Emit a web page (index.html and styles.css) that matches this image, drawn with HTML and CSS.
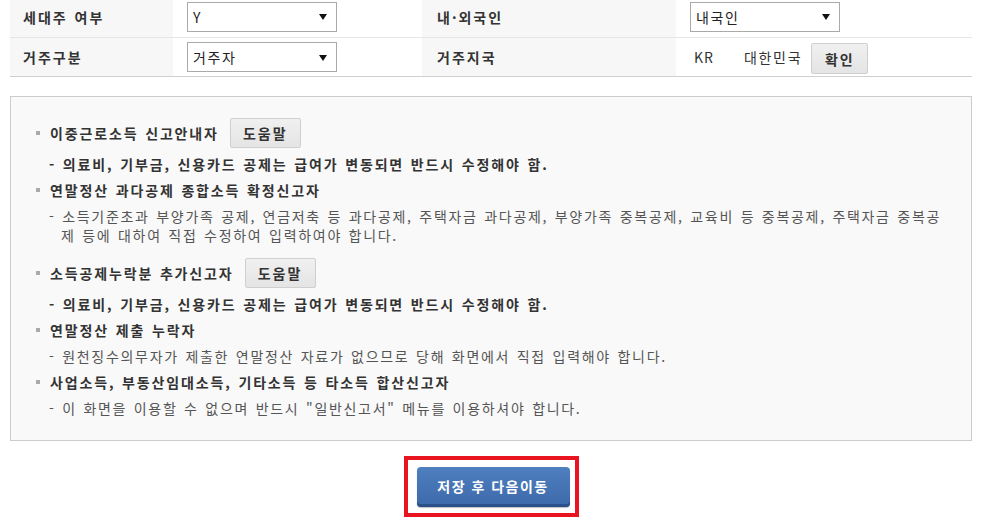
FILE: index.html
```html
<!DOCTYPE html>
<html lang="ko">
<head>
<meta charset="utf-8">
<title>연말정산</title>
<link rel="stylesheet" href="styles.css">
</head>
<body>
<div class="page">
  <div class="info-table">
    <div class="row row-first">
      <div class="cell label">세대주 여부</div>
      <div class="cell value">
        <div class="select"><span class="sel-text">Y</span><svg class="arrow" width="8" height="6" viewBox="0 0 8 6"><path d="M0 0H8L4 6Z" fill="#111"/></svg></div>
      </div>
      <div class="cell label label-2">내·외국인</div>
      <div class="cell value">
        <div class="select"><span class="sel-text">내국인</span><svg class="arrow" width="8" height="6" viewBox="0 0 8 6"><path d="M0 0H8L4 6Z" fill="#111"/></svg></div>
      </div>
    </div>
    <div class="row row-second">
      <div class="cell label">거주구분</div>
      <div class="cell value">
        <div class="select"><span class="sel-text">거주자</span><svg class="arrow" width="8" height="6" viewBox="0 0 8 6"><path d="M0 0H8L4 6Z" fill="#111"/></svg></div>
      </div>
      <div class="cell label label-2">거주지국</div>
      <div class="cell value country">
        <span class="code">KR</span>
        <span class="cname">대한민국</span>
        <button class="btn-gray btn-confirm" type="button">확인</button>
      </div>
    </div>
  </div>

  <div class="notice">
    <ul class="notice-list">
      <li class="head has-btn"><span class="bullet"></span><span class="head-text">이중근로소득 신고안내자</span><button class="btn-gray btn-help" type="button">도움말</button></li>
      <li class="desc strong">- 의료비, 기부금, 신용카드 공제는 급여가 변동되면 반드시 수정해야 함.</li>
      <li class="head"><span class="bullet"></span><span class="head-text">연말정산 과다공제 종합소득 확정신고자</span></li>
      <li class="desc multi">- 소득기준초과 부양가족 공제, 연금저축 등 과다공제, 주택자금 과다공제, 부양가족 중복공제, 교육비 등 중복공제, 주택자금 중복공<br>제 등에 대하여 직접 수정하여 입력하여야 합니다.</li>
      <li class="head has-btn"><span class="bullet"></span><span class="head-text">소득공제누락분 추가신고자</span><button class="btn-gray btn-help" type="button">도움말</button></li>
      <li class="desc strong">- 의료비, 기부금, 신용카드 공제는 급여가 변동되면 반드시 수정해야 함.</li>
      <li class="head"><span class="bullet"></span><span class="head-text">연말정산 제출 누락자</span></li>
      <li class="desc">- 원천징수의무자가 제출한 연말정산 자료가 없으므로 당해 화면에서 직접 입력해야 합니다.</li>
      <li class="head"><span class="bullet"></span><span class="head-text">사업소득, 부동산임대소득, 기타소득 등 타소득 합산신고자</span></li>
      <li class="desc">- 이 화면을 이용할 수 없으며 반드시 "일반신고서" 메뉴를 이용하셔야 합니다.</li>
    </ul>
  </div>

  <div class="actions">
    <div class="highlight">
      <button class="btn-save" type="button">저장 후 다음이동</button>
    </div>
  </div>
</div>
</body>
</html>
```

FILE: styles.css
```css
* { box-sizing: border-box; }

html, body {
  margin: 0;
  padding: 0;
  background: #ffffff;
}

body {
  font-family: "Noto Sans CJK KR", "Noto Sans", "Liberation Sans", sans-serif;
  font-size: 14px;
  color: #555;
  letter-spacing: 1.7px;
  word-spacing: 1px;
}

.page {
  width: 962px;
  margin-left: 10px;
}

/* ---------- top table ---------- */
.info-table {
  border-bottom: 1px solid #cfcfcf;
}

.row {
  display: grid;
  grid-template-columns: 163px 249px 254px 296px;
}

.row-first {
  height: 38px;
  border-bottom: 1px solid #e6e6e6;
}

.row-second {
  height: 38px;
}

.cell {
  display: flex;
  align-items: center;
  padding: 0 0 0 13px;
}

.row-first .cell { padding-bottom: 4px; }
.row-second .cell { padding-bottom: 0; }

.label {
  background: #f7f7f7;
  font-weight: bold;
  color: #333;
  letter-spacing: 2px;
}

.label-2 { padding-left: 15px; }

.value { padding-left: 14px; }

.select {
  width: 150px;
  height: 30px;
  border: 1px solid #aaaaaa;
  background: #fff;
  display: flex;
  align-items: center;
  justify-content: space-between;
  padding: 0 9px 0 5px;
  color: #222;
  letter-spacing: 1.6px;
}

.sel-text { line-height: 1; }

.arrow { display: block; margin-top: 1px; }

.country { padding-left: 18px; }

.code {
  color: #333;
  letter-spacing: 1px;
}

.cname {
  margin-left: 30px;
  color: #333;
}

.btn-gray {
  font-family: inherit;
  font-size: 14px;
  font-weight: bold;
  letter-spacing: 2px;
  color: #333;
  background: linear-gradient(#f0f0f0, #e4e4e4);
  border: 1px solid #cfcfcf;
  border-radius: 2px;
  padding: 0;
  height: 31px;
  cursor: pointer;
}

.btn-confirm {
  width: 57px;
  margin-left: 9px;
  margin-top: 3px;
}

/* ---------- notice box ---------- */
.notice {
  margin-top: 19px;
  height: 345px;
  border: 1px solid #cccccc;
  background: #f9f9f9;
}

.notice-list {
  list-style: none;
  margin: 0;
  padding: 18px 0 0 25px;
}

.head {
  display: flex;
  align-items: center;
  height: 26px;
  font-weight: bold;
  color: #333;
  letter-spacing: 1.85px;
}

.head.has-btn { height: 36px; }

.bullet {
  width: 4px;
  height: 4px;
  background: #aaaaaa;
  margin-right: 10px;
  flex: none;
}

.btn-help {
  width: 71px;
  height: 30px;
  margin-left: 11px;
}

.desc {
  line-height: 26px;
  padding-left: 25px;
  text-indent: -12px;
  color: #555;
}

.desc.strong {
  font-weight: bold;
  color: #333;
  letter-spacing: 1.85px;
}

.desc.multi {
  line-height: 19px;
  padding-top: 4px;
  padding-bottom: 10px;
  white-space: nowrap;
}

/* ---------- action ---------- */
.actions {
  display: flex;
  justify-content: center;
  margin-top: 15px;
}

.highlight {
  border: 4px solid #e8141f;
  padding: 7px 5px 6px 9px;
}

.btn-save {
  display: block;
  width: 153px;
  height: 40px;
  border: none;
  border-radius: 4px;
  background: linear-gradient(#4e7fbf, #3d69aa);
  box-shadow: inset 0 -3px 0 #2c5089, 0 1px 1px rgba(0,0,0,0.25);
  color: #ffffff;
  font-family: inherit;
  font-size: 14px;
  font-weight: bold;
  letter-spacing: 1.5px;
  padding: 0 0 2px 0;
  cursor: pointer;
}
```
